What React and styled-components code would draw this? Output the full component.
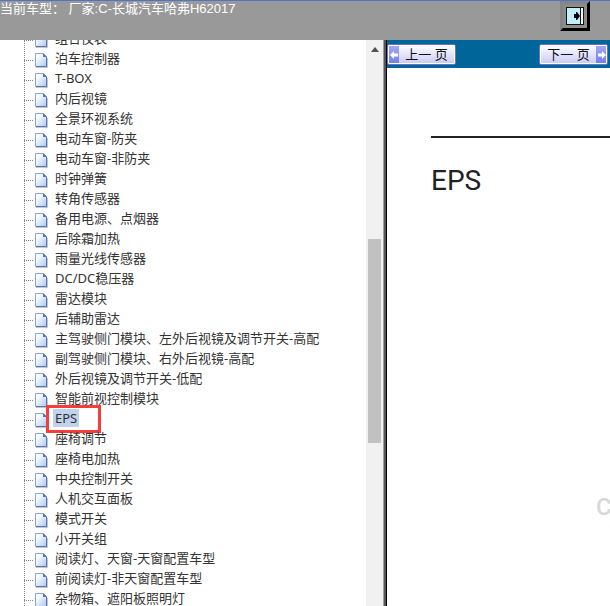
import React, { useState } from "react";
import styled, { createGlobalStyle } from "styled-components";

const modules = [
  "组合仪表",
  "泊车控制器",
  "T-BOX",
  "内后视镜",
  "全景环视系统",
  "电动车窗-防夹",
  "电动车窗-非防夹",
  "时钟弹簧",
  "转角传感器",
  "备用电源、点烟器",
  "后除霜加热",
  "雨量光线传感器",
  "DC/DC稳压器",
  "雷达模块",
  "后辅助雷达",
  "主驾驶侧门模块、左外后视镜及调节开关-高配",
  "副驾驶侧门模块、右外后视镜-高配",
  "外后视镜及调节开关-低配",
  "智能前视控制模块",
  "EPS",
  "座椅调节",
  "座椅电加热",
  "中央控制开关",
  "人机交互面板",
  "模式开关",
  "小开关组",
  "阅读灯、天窗-天窗配置车型",
  "前阅读灯-非天窗配置车型",
  "杂物箱、遮阳板照明灯",
];

const PageIcon = () => (
  <svg width="13" height="16" viewBox="0 0 13 16" aria-hidden="true">
    <defs>
      <linearGradient id="paper" x1="0" y1="0" x2="1" y2="1">
        <stop offset="0.2" stopColor="#ffffff" />
        <stop offset="1" stopColor="#a9c8f4" />
      </linearGradient>
    </defs>
    <path d="M1 14.500h11.500V5" fill="none" stroke="#c3c5cc" />
    <path d="M.5 .5h8l3 3v10H.5z" fill="url(#paper)" stroke="#86a4d6" />
    <path d="M11.500 4v9.500H1" fill="none" stroke="#5b73ae" />
    <path d="M8 0l4 4H8z" fill="#5875b5" />
  </svg>
);

const ArrowIcon = ({ back }) => (
  <svg width="9" height="10" viewBox="0 0 9 10" aria-hidden="true">
    <path
      d={back ? "M0 5l4-4v2.500h4v3H4V9z" : "M9 5L5 1v2.500H1v3h4V9z"}
      fill="#fff"
    />
  </svg>
);

const App = () => {
  const [selected, setSelected] = useState("EPS");

  return (
    <Page>
      <GlobalStyle />
      <Header>
        <HeaderTitle>当前车型： 厂家:C-长城汽车哈弗H62017</HeaderTitle>
        <ExitButton type="button" aria-label="退出">
          <svg width="18" height="18" viewBox="0 0 18 18">
            <path d="M0 0h18v18H0z" fill="#111" />
            <path d="M1 1h13v16H1z" fill="#c3effa" />
            <path d="M15 1h2v16h-2z" fill="#fff" />
            <path d="M8 7h2V5h1l3 4-3 4h-1v-2H8z" fill="#000" />
          </svg>
        </ExitButton>
      </Header>
      <Body>
        <TreePane>
          <Tree>
            {modules.map((name) => (
              <TreeItem key={name}>
                <PageIcon />
                <TreeLink
                  href="#"
                  $selected={name === selected}
                  onClick={(e) => {
                    e.preventDefault();
                    setSelected(name);
                  }}
                >
                  {name}
                  {name === selected && <Marker />}
                </TreeLink>
              </TreeItem>
            ))}
          </Tree>
          <Scrollbar>
            <svg width="8" height="5" viewBox="0 0 8 5">
              <path d="M0 5l4-5 4 5z" fill="#505050" />
            </svg>
            <Thumb />
          </Scrollbar>
        </TreePane>
        <Divider />
        <ContentPane>
          <Toolbar>
            <PagerButton type="button">
              <ArrowBox>
                <ArrowIcon back />
              </ArrowBox>
              <PagerLabel>上一 页</PagerLabel>
            </PagerButton>
            <PagerButton type="button">
              <PagerLabel>下一 页</PagerLabel>
              <ArrowBox>
                <ArrowIcon />
              </ArrowBox>
            </PagerButton>
          </Toolbar>
          <Sheet>
            <SheetTitle>EPS</SheetTitle>
            <Watermark>C</Watermark>
          </Sheet>
        </ContentPane>
      </Body>
    </Page>
  );
};

const GlobalStyle = createGlobalStyle`
  * {
    box-sizing: border-box;
  }
  body {
    margin: 0;
    background: white;
    font-family: "Noto Sans", "Noto Sans CJK SC", sans-serif;
    font-size: 13px;
    color: #333;
  }
  svg {
    display: block;
    flex: none;
  }
`;

const Page = styled.div`
  display: flex;
  flex-direction: column;
  height: 100vh;
  overflow: hidden;
`;

const Header = styled.header`
  display: flex;
  justify-content: space-between;
  align-items: flex-start;
  flex: none;
  height: 40px;
  padding-right: 20px;
  border-top: 1px solid #4f74c8;
  background: #999;
`;

const HeaderTitle = styled.h1`
  margin: 0;
  font-family: "Liberation Sans", "Noto Sans CJK SC", sans-serif;
  font-size: 13px;
  font-weight: 400;
  line-height: 16px;
  color: white;
  white-space: nowrap;
`;

const ExitButton = styled.button`
  width: 30px;
  height: 30px;
  padding: 3px;
  border: 3px solid;
  border-color: #858585 #000 #000 #858585;
  background: #8c8c8c;
`;

const Body = styled.div`
  display: flex;
  flex: 1;
  min-height: 0;
`;

const TreePane = styled.nav`
  display: flex;
  flex: none;
  width: 63%;
  max-width: 383px;
  overflow: hidden;
`;

const Tree = styled.ul`
  flex: 1;
  min-width: 0;
  /* list is scrolled part of a row down */
  margin: -11px 0 0;
  padding: 0 0 0 24px;
  list-style: none;
`;

const TreeItem = styled.li`
  display: flex;
  align-items: flex-start;
  gap: 5px;
  height: 20px;
  padding: 4px 0 0 11px;
  background:
    repeating-linear-gradient(#888 0 1px, transparent 1px 2px) 0 0 / 1px 100%
      no-repeat,
    repeating-linear-gradient(90deg, #888 0 1px, transparent 1px 2px) 0 11px /
      10px 1px no-repeat;
`;

const TreeLink = styled.a`
  position: relative;
  height: 18px;
  margin-top: -4px;
  padding: 0 2px;
  line-height: 18px;
  color: #333;
  text-decoration: none;
  white-space: nowrap;
  background: ${({ $selected }) => ($selected ? "#c0d2ec" : "transparent")};
`;

const Marker = styled.span`
  position: absolute;
  top: -4px;
  left: -7px;
  width: 55px;
  height: 28px;
  border: 3px solid #f83b3b;
`;

const Scrollbar = styled.div`
  display: flex;
  flex-direction: column;
  align-items: center;
  flex: none;
  width: 17px;
  padding-top: 7px;
  background: #f1f1f1;
`;

const Thumb = styled.div`
  width: 13px;
  height: 204px;
  margin-top: 187px;
  background: #c1c1c1;
`;

const Divider = styled.div`
  flex: none;
  width: 4px;
  border-left: 1px solid #a0a0a0;
  border-right: 1px solid #000;
  background: #555;
`;

const ContentPane = styled.main`
  display: flex;
  flex-direction: column;
  flex: 1;
  min-width: 0;
`;

const Toolbar = styled.div`
  display: flex;
  justify-content: space-between;
  align-items: center;
  flex: none;
  height: 28px;
  padding: 1px 2px 0 0;
  background: #069;
`;

const PagerButton = styled.button`
  display: flex;
  width: 69px;
  height: 21px;
  padding: 1px;
  border: 1px solid #6a72c4;
  border-radius: 2px;
  background: linear-gradient(#fff, #e6e6fc 45%, #c9c9f6);
  box-shadow: inset 0 0 0 1px #fff;
`;

const ArrowBox = styled.span`
  display: flex;
  justify-content: center;
  align-items: center;
  flex: none;
  width: 10px;
  height: 100%;
  background: linear-gradient(#a3a8f2, #7480e6);
`;

const PagerLabel = styled.span`
  flex: 1;
  font-family: "Liberation Sans", "Noto Sans CJK SC", sans-serif;
  font-size: 13px;
  line-height: 18px;
  color: #111;
  white-space: nowrap;
`;

const Sheet = styled.article`
  flex: 1;
  margin-top: 68px;
  padding-left: 44px;
  overflow: hidden;
`;

const SheetTitle = styled.h2`
  margin: 0;
  padding-top: 25px;
  border-top: 2px solid #222;
  font-family: Roboto, sans-serif;
  font-size: 28px;
  font-weight: 400;
  line-height: 36px;
  color: #222;
`;

const Watermark = styled.p`
  margin: 294px 0 0;
  padding-left: 165px;
  font-family: Roboto, sans-serif;
  font-size: 24px;
  font-weight: 500;
  line-height: 28px;
  color: #d8d8d8;
`;

export default App;
